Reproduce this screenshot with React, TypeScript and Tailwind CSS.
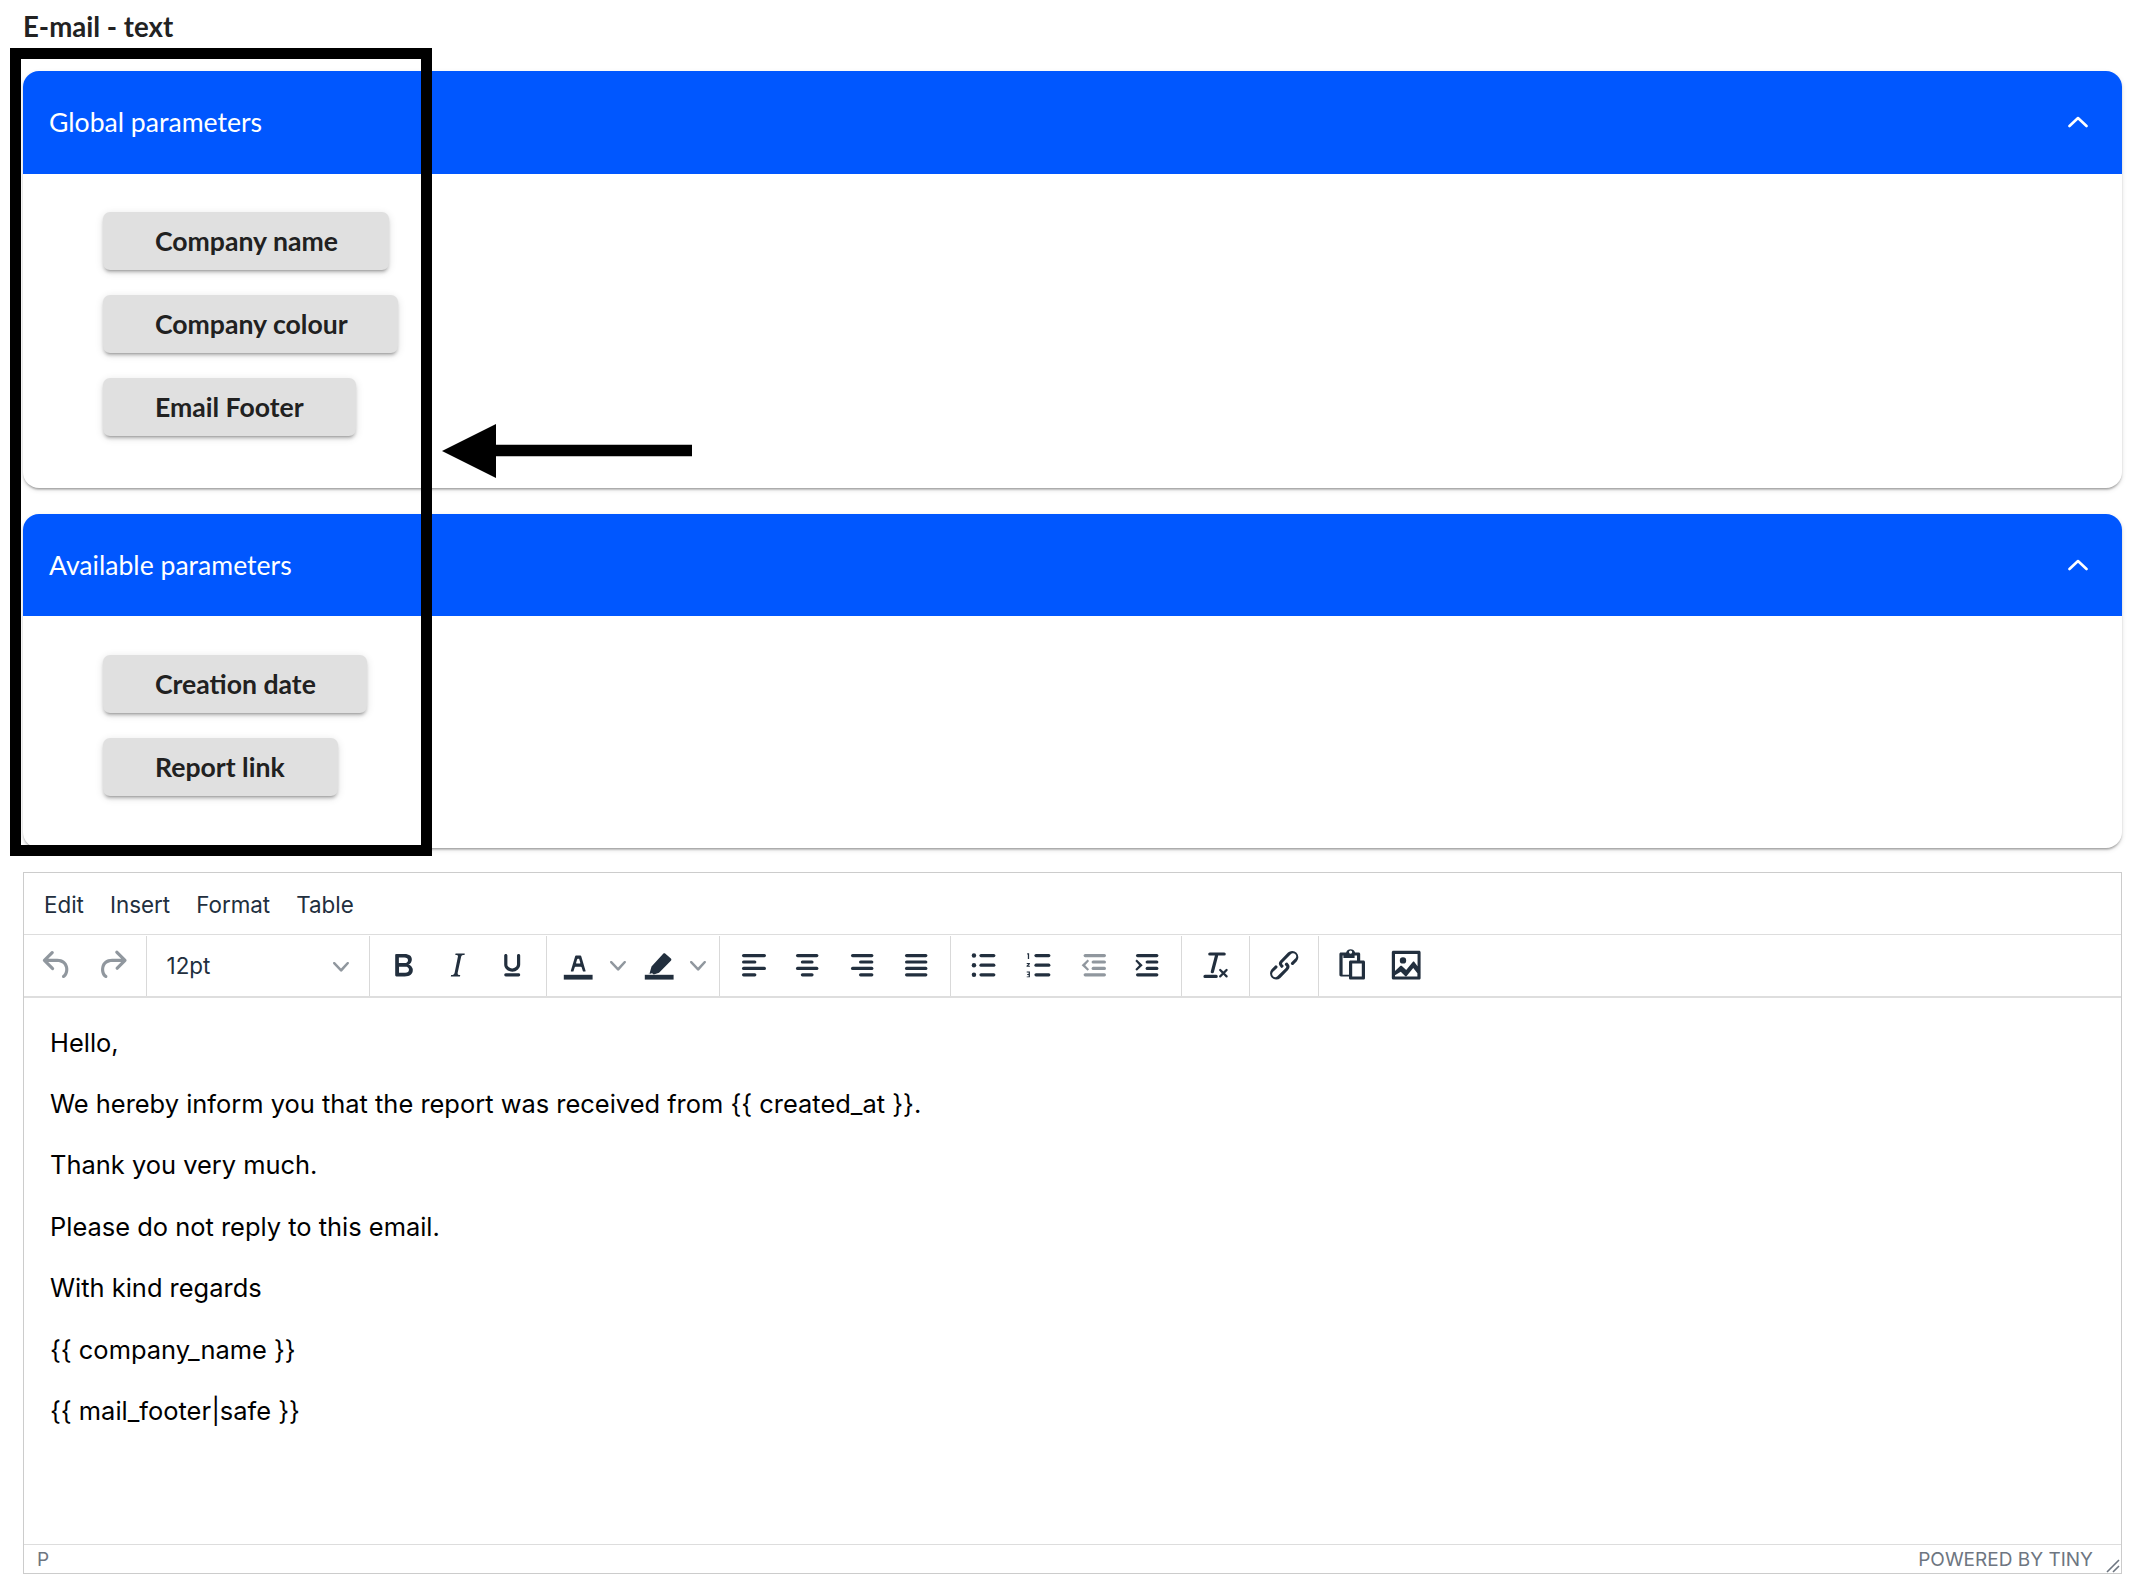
import React from "react";

const ICON = "#222f3e";

function Bars({ rows }: { rows: [number, number, number][] }) {
  return (
    <>
      {rows.map(([x, y, w], i) => (
        <rect key={i} x={x} y={y} width={w} height={2} rx={1} />
      ))}
    </>
  );
}

function Icon({ children, faded }: { children: React.ReactNode; faded?: boolean }) {
  return (
    <svg viewBox="0 0 24 24" className="w-[38.4px] h-[38.4px]" fill={ICON} fillOpacity={faded ? 0.5 : 1}>
      {children}
    </svg>
  );
}

function Btn({ children }: { children: React.ReactNode }) {
  return <div className="w-[54.4px] h-[54px] flex items-center justify-center shrink-0">{children}</div>;
}

function Group({ children, last, className }: { children: React.ReactNode; last?: boolean; className?: string }) {
  return (
    <div className={`flex items-center h-full px-[6.4px] ${last ? "" : "border-r-[1.6px] border-[#d9d9d9]"} ${className ?? ""}`}>
      {children}
    </div>
  );
}

function Caret() {
  return (
    <svg viewBox="0 0 10 10" className="w-[16px] h-[16px]" fill={ICON} fillOpacity={0.5}>
      <path d="M8.7 2.2c.3-.3.8-.3 1 0 .4.2.4.7 0 1L5.7 7.8c-.3.3-.9.3-1.2 0L.2 3.2c-.3-.3-.3-.8 0-1 .3-.3.8-.3 1.1 0L5 6l3.7-3.8Z" transform="translate(0 0.5)" />
    </svg>
  );
}

function ParamButton({ label, width }: { label: string; width: string }) {
  return (
    <div className={`${width} h-[58px] flex items-center pl-[52px] bg-[#e0e0e0] rounded-[7px] text-[#212121] text-[26.6px] font-bold whitespace-nowrap shadow-[0_4px_2px_-3px_rgba(0,0,0,0.2),0_3px_3px_0_rgba(0,0,0,0.14),0_2px_8px_0_rgba(0,0,0,0.12)]`}>
      <span className="pt-[2px]">{label}</span>
    </div>
  );
}

function Panel({ title, className, children }: { title: string; className: string; children: React.ReactNode }) {
  return (
    <section className={`bg-white rounded-[16px] shadow-[0_3px_2px_-2px_rgba(0,0,0,0.2),0_2px_2px_0_rgba(0,0,0,0.14),0_2px_5px_0_rgba(0,0,0,0.12)] ${className}`}>
      <header className="h-[102.5px] bg-[#0057ff] rounded-t-[16px] flex items-center justify-between pl-[26px] pr-[34px] text-white text-[26.6px]">
        <span className="pt-[2px]">{title}</span>
        <svg viewBox="0 0 20 12" className="w-[20px] h-[12px]" fill="none" stroke="#fff" strokeWidth={2.6} strokeLinecap="round" strokeLinejoin="round">
          <path d="M1.5 10 10 2l8.5 8" />
        </svg>
      </header>
      {children}
    </section>
  );
}

export default function App() {
  return (
    <div className="relative w-[2140px] h-[1584px] bg-white overflow-hidden font-['Lato',sans-serif] pl-[23px] pr-[18px] pt-[9px]">
      <h1 className="text-[27.6px] leading-[36px] font-bold text-[#222] mb-[26px]">E-mail - text</h1>

      <Panel title="Global parameters" className="h-[417px] mb-[25.5px]">
        <div className="flex flex-col items-start gap-[25px] pl-[80px] pt-[38px]">
          <ParamButton label="Company name" width="w-[286px]" />
          <ParamButton label="Company colour" width="w-[295px]" />
          <ParamButton label="Email Footer" width="w-[253px]" />
        </div>
      </Panel>

      <Panel title="Available parameters" className="h-[334px] mb-[24px]">
        <div className="flex flex-col items-start gap-[25.5px] pl-[80px] pt-[38.5px]">
          <ParamButton label="Creation date" width="w-[264px]" />
          <ParamButton label="Report link" width="w-[235px]" />
        </div>
      </Panel>

      <div className="h-[702px] border-[1.6px] border-[#cccccc] flex flex-col font-['Inter',sans-serif]">
        <div className="h-[62px] flex items-center pl-[7px] pt-[3px] text-[22.4px] text-[#222f3e] border-b-[1.6px] border-[#dddddd] shrink-0">
          <span className="px-[13px]">Edit</span>
          <span className="px-[13px]">Insert</span>
          <span className="px-[13px]">Format</span>
          <span className="px-[13px]">Table</span>
        </div>

        <div className="h-[63px] flex items-stretch pt-[1px] border-b-[2px] border-[#dedede] shrink-0">
          <Group>
            <Btn>
              <Icon faded>
                <path d="M6.4 8H12c3.7 0 6.2 2 6.8 5.1.6 2.7-.4 5.6-2.3 6.8a1 1 0 0 1-1-1.8c1.1-.6 1.8-2.7 1.4-4.6-.5-2.1-2.1-3.5-4.9-3.5H6.4l3.3 3.3a1 1 0 1 1-1.4 1.4l-5-5a1 1 0 0 1 0-1.4l5-5a1 1 0 0 1 1.4 1.4L6.4 8Z" />
              </Icon>
            </Btn>
            <Btn>
              <Icon faded>
                <path d="M17.6 10H12c-2.8 0-4.4 1.4-4.9 3.5-.4 2 .3 4 1.4 4.6a1 1 0 1 1-1 1.8c-2-1.2-2.9-4.1-2.3-6.8.6-3 3-5.1 6.8-5.1h5.6l-3.3-3.3a1 1 0 1 1 1.4-1.4l5 5a1 1 0 0 1 0 1.4l-5 5a1 1 0 0 1-1.4-1.4l3.3-3.3Z" />
              </Icon>
            </Btn>
          </Group>

          <div className="w-[223px] h-full flex items-center justify-between pl-[20px] pr-[20px] border-r-[1.6px] border-[#d9d9d9] text-[22.4px] text-[#222f3e] shrink-0">
            <span>12pt</span>
            <Caret />
          </div>

          <Group>
            <Btn>
              <Icon>
                <path d="M7.8 19c-.3 0-.5 0-.6-.2l-.2-.5V5.7c0-.2 0-.4.2-.5l.6-.2h5c1.5 0 2.7.3 3.5 1 .7.6 1.1 1.4 1.1 2.5a3 3 0 0 1-.6 1.9c-.4.6-1 1-1.6 1.2.4.1.9.3 1.3.6s.8.7 1 1.2c.4.4.5 1 .5 1.6 0 1.3-.4 2.3-1.3 3-.8.7-2.1 1-3.8 1H7.8Zm5-8.3c.6 0 1.2-.1 1.6-.5.4-.3.6-.7.6-1.3 0-1.1-.8-1.7-2.3-1.7H9.3v3.5h3.4Zm.5 6c.7 0 1.3-.1 1.7-.4.4-.4.6-.9.6-1.5s-.2-1-.7-1.4c-.4-.3-1-.4-2-.4H9.4v3.8h4Z" fillRule="evenodd" />
              </Icon>
            </Btn>
            <Btn>
              <Icon>
                <path d="m16.7 4.7-.1.9h-.3c-.6 0-1 0-1.4.3-.3.3-.4.6-.5 1.1l-2.1 9.8v.6c0 .5.4.8 1.4.8h.2l-.2.8H8l.2-.8h.2c1.1 0 1.8-.5 2-1.5l2-9.8.1-.5c0-.6-.4-.8-1.4-.8h-.3l.2-.9h5.8Z" />
              </Icon>
            </Btn>
            <Btn>
              <Icon>
                <path d="M16 5c.6 0 1 .4 1 1v5.5a4 4 0 0 1-.4 1.8l-1 1.4a5.3 5.3 0 0 1-5.5 1 5 5 0 0 1-1.6-1c-.5-.4-.8-.9-1.1-1.4a4 4 0 0 1-.4-1.8V6c0-.6.4-1 1-1s1 .4 1 1v5.5c0 .3 0 .6.2 1l.6.7a3.3 3.3 0 0 0 2.2.8 3.4 3.4 0 0 0 2.2-.8c.3-.2.4-.5.6-.8l.2-.9V6c0-.6.4-1 1-1ZM8 17h8c.6 0 1 .4 1 1s-.4 1-1 1H8a1 1 0 0 1 0-2Z" />
              </Icon>
            </Btn>
          </Group>

          <Group className="w-[173px]">
            <div className="w-[80px] flex items-center pl-[6px] shrink-0">
              <Icon>
                <path d="M3 18h18v3H3z" />
                <path d="M8.7 16h-.8a.5.5 0 0 1-.5-.6l2.7-9c.1-.3.3-.4.5-.4h2.8c.2 0 .4.1.5.4l2.7 9a.5.5 0 0 1-.5.6h-.8a.5.5 0 0 1-.4-.4l-.7-2.2c0-.3-.3-.4-.5-.4h-3.4c-.2 0-.4.1-.5.4l-.7 2.2c0 .3-.2.4-.4.4Zm2.6-7.6-.6 2a.5.5 0 0 0 .5.6h1.6a.5.5 0 0 0 .5-.6l-.6-2c0-.3-.3-.4-.5-.4h-.4c-.2 0-.4.1-.5.4Z" fillRule="evenodd" />
              </Icon>
              <div className="ml-[13px]"><Caret /></div>
            </div>
            <div className="w-[80px] flex items-center pl-[7px] shrink-0">
              <Icon>
                <path d="M3 18h18v3H3z" />
                <path d="M6 17l1.2-4.2 7.3-8c.4-.4 1-.4 1.4 0l3.4 3c.4.4.4 1 0 1.4l-7.4 7.6-3.3 1-1.2-.9-.5.5-1.9-.4Z" />
              </Icon>
              <div className="ml-[12px]"><Caret /></div>
            </div>
          </Group>

          <Group>
            <Btn><Icon><Bars rows={[[5, 5, 15], [5, 9, 9], [5, 13, 15], [5, 17, 9]]} /></Icon></Btn>
            <Btn><Icon><Bars rows={[[5, 5, 14], [8, 9, 8], [5, 13, 14], [8, 17, 8]]} /></Icon></Btn>
            <Btn><Icon><Bars rows={[[5, 5, 14], [10, 9, 9], [5, 13, 14], [10, 17, 9]]} /></Icon></Btn>
            <Btn><Icon><Bars rows={[[5, 5, 14], [5, 9, 14], [5, 13, 14], [5, 17, 14]]} /></Icon></Btn>
          </Group>

          <Group>
            <Btn>
              <Icon>
                <circle cx="5.6" cy="6" r="1.4" /><circle cx="5.6" cy="12" r="1.4" /><circle cx="5.6" cy="18" r="1.4" />
                <Bars rows={[[9, 5, 10], [9, 11, 10], [9, 17, 10]]} />
              </Icon>
            </Btn>
            <Btn>
              <Icon>
                <path d="M4.5 4.5h1.2v3.6H4.9V5.3h-.4ZM4.2 10.6h2v.7l-1 1h1v.7h-2.1v-.7l1.1-1.1h-1ZM4.2 16h2v3.6h-2v-.6h1.2v-.9h-.9v-.6h.9v-.9H4.2Z" />
                <Bars rows={[[9, 5, 10], [9, 11, 10], [9, 17, 10]]} />
              </Icon>
            </Btn>
            <Btn>
              <Icon faded>
                <Bars rows={[[6, 5, 14], [11, 9, 9], [11, 13, 9], [6, 17, 14]]} />
                <path d="M8.5 8.5 4.8 12l3.7 3.5.9-.9L7 12l2.4-2.6Z" />
              </Icon>
            </Btn>
            <Btn>
              <Icon>
                <Bars rows={[[5, 5, 14], [11, 9, 8], [11, 13, 8], [5, 17, 14]]} />
                <path d="M5.5 8.5 9.2 12l-3.7 3.5-.9-.9L7 12 4.6 9.4Z" />
              </Icon>
            </Btn>
          </Group>

          <Group>
            <Btn>
              <Icon>
                <path d="M13.2 6a1 1 0 0 1 0 .2l-2.6 10a1 1 0 0 1-1 .8h-.2a.8.8 0 0 1-.8-1l2.6-10H8a1 1 0 1 1 0-2h9a1 1 0 0 1 0 2h-3.8ZM5 18h7a1 1 0 0 1 0 2H5a1 1 0 0 1 0-2Zm13 1.5L16.5 18 15 19.5a.7.7 0 0 1-1-1l1.5-1.5-1.5-1.5a.7.7 0 0 1 1-1l1.5 1.5 1.5-1.5a.7.7 0 0 1 1 1L17.5 17l1.5 1.5a.7.7 0 0 1-1 1Z" />
              </Icon>
            </Btn>
          </Group>

          <Group>
            <Btn>
              <Icon>
                <path d="M6.2 12.3a1 1 0 0 1 1.4 1.4l-2 2a2 2 0 1 0 2.6 2.8l4.8-4.8a1 1 0 0 0 0-1.4 1 1 0 1 1 1.4-1.3 2.9 2.9 0 0 1 0 4L9.6 20a3.9 3.9 0 0 1-5.5-5.5l2-2Zm11.6-.6a1 1 0 0 1-1.4-1.4l2-2a2 2 0 1 0-2.6-2.8L11 10.3a1 1 0 0 0 0 1.4A1 1 0 1 1 9.6 13a2.9 2.9 0 0 1 0-4L14.4 4a3.9 3.9 0 0 1 5.5 5.5l-2 2Z" />
              </Icon>
            </Btn>
          </Group>

          <Group last>
            <Btn>
              <Icon>
                <path fillRule="evenodd" d="M5 4h3.2a3 3 0 0 1 5.6 0H16c.6 0 1 .4 1 1v4h2c.6 0 1 .4 1 1v10c0 .6-.4 1-1 1h-8c-.6 0-1-.4-1-1v-1H5c-.6 0-1-.4-1-1V5c0-.6.4-1 1-1Zm1 2v12h4v-8c0-.6.4-1 1-1h4V6h-1.5v1.5h-7V6H6Zm6 5v8h6v-8h-6Zm-1-8.2a1 1 0 1 0 0 2 1 1 0 0 0 0-2Z" />
              </Icon>
            </Btn>
            <Btn>
              <Icon>
                <path fillRule="evenodd" d="M5 15.7l3.3-3.2c.3-.3.7-.3 1 0L12 15l4.1-5c.3-.4.8-.4 1 0l2 2.7V5H5v10.7ZM5 18.3V19h14v-2l-2.6-3.3-4.1 5a.7.7 0 0 1-1 0l-2.7-2.6L5 18.3ZM4 3h16c.6 0 1 .4 1 1v16c0 .6-.4 1-1 1H4a1 1 0 0 1-1-1V4c0-.6.4-1 1-1Zm6 8a2 2 0 1 1 0-4 2 2 0 0 1 0 4Z" />
              </Icon>
            </Btn>
          </Group>
        </div>

        <div className="flex-1 px-[26px] pt-[27px] text-[25.45px] leading-[35.84px] text-black">
          <p className="mb-[25.6px]">Hello,</p>
          <p className="mb-[25.6px]">We hereby inform you that the report was received from {"{{ created_at }}"}.</p>
          <p className="mb-[25.6px]">Thank you very much.</p>
          <p className="mb-[25.6px]">Please do not reply to this email.</p>
          <p className="mb-[25.6px]">With kind regards</p>
          <p className="mb-[25.6px]">{"{{ company_name }}"}</p>
          <p>{"{{ mail_footer|safe }}"}</p>
        </div>

        <div className="relative h-[29px] border-t-[1.6px] border-[#dddddd] flex items-center justify-between pl-[13px] pr-[28px] pt-[3px] text-[19px] text-[#6e7681] shrink-0">
          <span>P</span>
          <span>POWERED BY TINY</span>
          <svg viewBox="0 0 14 14" className="absolute right-[1px] bottom-0 w-[14px] h-[14px]" fill="none" stroke="#6e7681" strokeWidth={1.6}>
            <path d="M1 13 13 1M7 13l6-6" />
          </svg>
        </div>
      </div>

      <div className="absolute left-[9.5px] top-[47.5px] w-[422px] h-[808.5px] border-[11px] border-black pointer-events-none" />

      <svg viewBox="0 0 250 54" className="absolute left-[442px] top-[424px] w-[250px] h-[54px]" fill="#000">
        <path d="M0 27 54 0v20.7h196v11.5H54V54Z" />
      </svg>
    </div>
  );
}
